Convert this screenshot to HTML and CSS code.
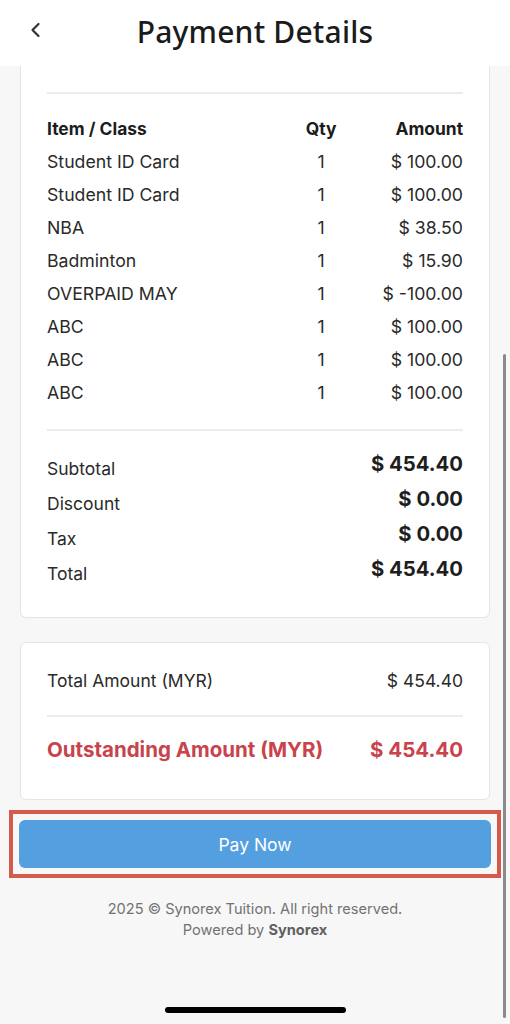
FILE: index.html
```html
<!DOCTYPE html>
<html>
<head>
<meta charset="utf-8">
<link rel="stylesheet" href="styles.css">
</head>
<body>
<div class="screen">
  <header class="topbar">
    <span class="back">
      <svg width="14" height="18" viewBox="0 0 14 18"><path d="M9.5 3 L3.5 9 L9.5 15" fill="none" stroke="#333" stroke-width="2.2" stroke-linecap="round" stroke-linejoin="round"/></svg>
    </span>
    <h1 class="title">Payment Details</h1>
  </header>

  <main class="content">
    <section class="card card-items">
      <hr class="divider">
      <div class="items">
        <div class="cell head">Item / Class</div><div class="cell head qty">Qty</div><div class="cell head amt">Amount</div>
        <div class="cell">Student ID Card</div><div class="cell qty">1</div><div class="cell amt">$ 100.00</div>
        <div class="cell">Student ID Card</div><div class="cell qty">1</div><div class="cell amt">$ 100.00</div>
        <div class="cell">NBA</div><div class="cell qty">1</div><div class="cell amt">$ 38.50</div>
        <div class="cell">Badminton</div><div class="cell qty">1</div><div class="cell amt">$ 15.90</div>
        <div class="cell">OVERPAID MAY</div><div class="cell qty">1</div><div class="cell amt">$ -100.00</div>
        <div class="cell">ABC</div><div class="cell qty">1</div><div class="cell amt">$ 100.00</div>
        <div class="cell">ABC</div><div class="cell qty">1</div><div class="cell amt">$ 100.00</div>
        <div class="cell">ABC</div><div class="cell qty">1</div><div class="cell amt">$ 100.00</div>
      </div>
      <hr class="divider divider-sum">
      <div class="summary">
        <div class="sum-row"><span class="sum-label">Subtotal</span><span class="sum-value">$ 454.40</span></div>
        <div class="sum-row"><span class="sum-label">Discount</span><span class="sum-value">$ 0.00</span></div>
        <div class="sum-row"><span class="sum-label">Tax</span><span class="sum-value">$ 0.00</span></div>
        <div class="sum-row"><span class="sum-label">Total</span><span class="sum-value">$ 454.40</span></div>
      </div>
    </section>

    <section class="card card-total">
      <div class="total-row"><span>Total Amount (MYR)</span><span>$ 454.40</span></div>
      <hr class="divider">
      <div class="outstanding-row"><span>Outstanding Amount (MYR)</span><span>$ 454.40</span></div>
    </section>

    <div class="highlight">
      <button class="pay-btn">Pay Now</button>
    </div>

    <footer class="footer">
      <div>2025 © Synorex Tuition. All right reserved.</div>
      <div>Powered by <b>Synorex</b></div>
    </footer>
  </main>

  <div class="scrollbar"></div>
  <div class="home-indicator"></div>
</div>
</body>
</html>
```

FILE: styles.css
```css
* { box-sizing: border-box; }
html, body { margin: 0; padding: 0; }
body {
  background: #f7f7f7;
  font-family: Inter, "Noto Sans", "Liberation Sans", sans-serif;
  color: #222;
}
.screen {
  position: relative;
  width: 510px;
  height: 1024px;
  overflow: hidden;
  background: #f7f7f7;
}
.topbar {
  height: 66px;
  background: #fff;
  display: flex;
  align-items: center;
  justify-content: center;
  position: relative;
}
.back {
  position: absolute;
  left: 29px;
  top: 21px;
  display: flex;
}
.title {
  margin: 0 0 4px 0;
  font-family: "Noto Sans", "Open Sans", sans-serif;
  font-weight: 500;
  font-size: 30px;
  letter-spacing: 0.2px;
  color: #1b1b1b;
}
.content {
  padding: 0 20px;
}
.card {
  background: #fff;
  border: 1px solid #e4e4e4;
  border-radius: 6px;
}
.card-items {
  border-top: none;
  border-radius: 0 0 6px 6px;
  padding: 26px 26px 31px;
}
.divider {
  border: none;
  border-top: 2px solid #ececec;
  margin: 0;
}
.items {
  display: grid;
  grid-template-columns: 1fr 60px 112px;
  margin-top: 18px;
  font-size: 17.7px;
  color: #2a2a2a;
}
.cell {
  height: 33px;
  line-height: 33px;
  white-space: nowrap;
}
.cell.head { font-weight: 700; color: #1c1c1c; font-size: 17.4px; }
.cell.qty { text-align: center; }
.cell.amt { text-align: right; }
.divider-sum { margin-top: 20px; }
.summary {
  margin-top: 15px;
}
.sum-row {
  height: 35px;
  display: flex;
  align-items: center;
  justify-content: space-between;
}
.sum-label {
  font-size: 17.5px;
  color: #2a2a2a;
  padding-top: 9px;
}
.sum-value {
  font-size: 20.3px;
  font-weight: 700;
  color: #1e1e1e;
}
.card-total {
  margin-top: 24px;
  padding: 19px 26px 31px;
}
.total-row, .outstanding-row {
  display: flex;
  justify-content: space-between;
  align-items: center;
}
.total-row {
  height: 36px;
  font-size: 17.5px;
  color: #2a2a2a;
  margin-bottom: 17px;
}
.outstanding-row {
  height: 38px;
  margin-top: 13px;
  font-size: 20.5px;
  font-weight: 700;
  color: #c8434c;
}
.highlight {
  margin: 10px -11px 0;
  border: 4px solid #d65a4c;
  padding: 6px;
}
.pay-btn {
  display: block;
  width: 100%;
  height: 48px;
  border: none;
  border-radius: 6px;
  background: #539fe0;
  color: #fff;
  font-family: Inter, "Noto Sans", sans-serif;
  font-size: 17.5px;
  padding: 0;
}
.footer {
  margin-top: 21px;
  text-align: center;
  font-size: 14.6px;
  line-height: 21px;
  color: #727272;
}
.footer b { font-weight: 700; color: #5f5f5f; }
.scrollbar {
  position: absolute;
  left: 503px;
  top: 354px;
  width: 3px;
  height: 664px;
  border-radius: 2px;
  background: #8a8a8a;
}
.home-indicator {
  position: absolute;
  left: 165px;
  top: 1007px;
  width: 181px;
  height: 6px;
  border-radius: 3px;
  background: #000;
}
```
